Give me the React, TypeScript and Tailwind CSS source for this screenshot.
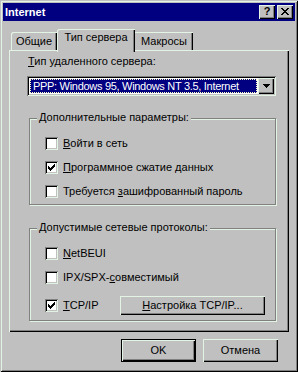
import React from "react";

const raised =
  "shadow-[inset_1px_1px_0_#e4f4e4,inset_-1px_-1px_0_#000,inset_-2px_-2px_0_#808080,inset_2px_2px_0_#c0c0c0]";
const sunken =
  "shadow-[inset_1px_1px_0_#808080,inset_-1px_-1px_0_#e4f4e4,inset_2px_2px_0_#000,inset_-2px_-2px_0_#c0c0c0]";

function Check() {
  return (
    <svg width="7" height="7" viewBox="0 0 7 7" shapeRendering="crispEdges" className="block">
      <path
        d="M6 0h1v1H6zM5 1h2v1H5zM0 2h1v1H0zM4 2h3v1H4zM0 3h2v1H0zM3 3h3v1H3zM0 4h5v1H0zM1 5h3v1H1zM2 6h1v1H2z"
        fill="#000"
      />
    </svg>
  );
}

function CheckBox({ checked }: { checked?: boolean }) {
  return (
    <div className={`w-[13px] h-[13px] bg-white flex items-center justify-center shrink-0 ${sunken}`}>
      {checked ? <Check /> : null}
    </div>
  );
}

function Row({ checked, children, className = "" }: { checked?: boolean; children: React.ReactNode; className?: string }) {
  return (
    <div className={`flex items-center h-[13px] ${className}`}>
      <CheckBox checked={checked} />
      <span className="ml-[5px] leading-[13px] whitespace-nowrap">{children}</span>
    </div>
  );
}

function Group({ title, className = "", children }: { title: string; className?: string; children: React.ReactNode }) {
  return (
    <div
      className={`relative ml-[20px] w-[247px] border border-[#808080] shadow-[1px_1px_0_#e4f4e4,inset_1px_1px_0_#e4f4e4] ${className}`}
    >
      <div className="absolute left-[7px] top-[-8px] px-[2px] bg-[#c0c0c0] leading-[13px] whitespace-nowrap">{title}</div>
      {children}
    </div>
  );
}

export default function App() {
  return (
    <div
      className="w-[298px] h-[372px] bg-[#c0c0c0] p-[3px] flex flex-col text-[11px] text-black shadow-[inset_1px_1px_0_#c0c0c0,inset_-1px_-1px_0_#000,inset_2px_2px_0_#e4f4e4,inset_-2px_-2px_0_#808080]"
      style={{ fontFamily: '"Liberation Sans", Arial, sans-serif' }}
    >
      {/* Title bar */}
      <div className="h-[18px] bg-[#000080] flex items-center pl-[2px] pr-[2px]">
        <span className="text-white font-bold leading-[13px]">Internet</span>
        <div className="ml-auto flex items-center">
          <div className={`w-[16px] h-[14px] bg-[#c0c0c0] flex items-center justify-center ${raised}`}>
            <span className="font-bold text-[11px] leading-[11px] mt-[-1px]">?</span>
          </div>
          <div className={`ml-[2px] w-[16px] h-[14px] bg-[#c0c0c0] flex items-center justify-center ${raised}`}>
            <svg width="8" height="7" viewBox="0 0 8 7" shapeRendering="crispEdges" className="block mt-[-1px]">
              <path
                d="M0 0h2v1H0zM6 0h2v1H6zM1 1h2v1H1zM5 1h2v1H5zM2 2h4v1H2zM3 3h2v1H3zM2 4h4v1H2zM1 5h2v1H1zM5 5h2v1H5zM0 6h2v1H0zM6 6h2v1H6z"
                fill="#000"
              />
            </svg>
          </div>
        </div>
      </div>

      {/* Body */}
      <div className="flex flex-col px-[6px] mt-[8px]">
        {/* Tabs */}
        <div className="relative z-10 flex items-end pl-[2px] h-[21px]">
          <div className="w-[46px] h-[18px] rounded-tl-[2px] shadow-[inset_1px_1px_0_#e4f4e4,inset_-1px_0_0_#000,inset_-2px_0_0_#808080] flex justify-center pt-[3px] leading-[13px]">
            Общие
          </div>
          <div className="w-[78px] h-[23px] mb-[-2px] bg-[#c0c0c0] rounded-tl-[2px] shadow-[inset_1px_1px_0_#e4f4e4,inset_-1px_0_0_#000,inset_-2px_0_0_#808080] flex justify-center pt-[2px] leading-[13px]">
            Тип сервера
          </div>
          <div className="w-[58px] h-[18px] shadow-[inset_0_1px_0_#e4f4e4,inset_-1px_0_0_#000,inset_-2px_0_0_#808080] flex justify-center pt-[3px] leading-[13px]">
            Макросы
          </div>
        </div>

        {/* Panel */}
        <div className="h-[282px] flex flex-col shadow-[inset_1px_1px_0_#e4f4e4,inset_-1px_-1px_0_#000,inset_-2px_-2px_0_#808080]">
          <div className="ml-[19px] mt-[5px] leading-[13px]">
            <span className="underline">Т</span>ип удаленного сервера:
          </div>
          <div className={`ml-[18px] mt-[8px] w-[249px] h-[20px] bg-white flex items-center p-[2px] ${sunken}`}>
            <div className="flex-1 h-[16px] p-[1px]">
              <div className="h-[14px] bg-[#000080] text-white border border-dotted border-[#ffffc0] pl-[2px] leading-[12px] tracking-[-0.3px] whitespace-nowrap overflow-hidden">
                PPP: Windows 95, Windows NT 3.5, Internet
              </div>
            </div>
            <div className={`w-[16px] h-[16px] bg-[#c0c0c0] flex items-center justify-center ${raised}`}>
              <svg width="7" height="4" viewBox="0 0 7 4" shapeRendering="crispEdges" className="block">
                <path d="M0 0h7v1H0zM1 1h5v1H1zM2 2h3v1H2zM3 3h1v1H3z" fill="#000" />
              </svg>
            </div>
          </div>

          <Group title="Дополнительные параметры:" className="mt-[22px] h-[87px]">
            <div className="flex flex-col pl-[15px] pt-[18px]">
              <Row>
                <span className="underline">В</span>ойти в сеть
              </Row>
              <Row checked className="mt-[11px]">
                <span className="underline">П</span>рограммное сжатие данных
              </Row>
              <Row className="mt-[11px]">
                Требуется <span className="underline">з</span>ашифрованный пароль
              </Row>
            </div>
          </Group>

          <Group title="Допустимые сетевые протоколы:" className="mt-[23px] h-[93px]">
            <div className="flex flex-col pl-[15px] pt-[18px]">
              <Row>
                <span className="underline">N</span>etBEUI
              </Row>
              <Row className="mt-[11px]">
                IPX/SPX-<span className="underline">с</span>овместимый
              </Row>
              <div className="flex items-center mt-[12px]">
                <div className="w-[75px] shrink-0">
                  <Row checked>
                    <span className="underline">Т</span>CP/IP
                  </Row>
                </div>
                <div
                  className={`w-[145px] h-[19px] bg-[#c0c0c0] flex items-center justify-center leading-[13px] ${raised}`}
                >
                  <span>
                    <span className="underline">Н</span>астройка TCP/IP...
                  </span>
                </div>
              </div>
            </div>
          </Group>
        </div>

        {/* Buttons */}
        <div className="flex justify-end gap-[7px] pr-[11px] mt-[7px]">
          <div className="w-[75px] h-[23px] border border-black">
            <div className={`w-full h-full bg-[#c0c0c0] flex items-center justify-center leading-[13px] ${raised}`}>OK</div>
          </div>
          <div className={`w-[75px] h-[23px] bg-[#c0c0c0] flex items-center justify-center leading-[13px] ${raised}`}>
            Отмена
          </div>
        </div>
      </div>
    </div>
  );
}
